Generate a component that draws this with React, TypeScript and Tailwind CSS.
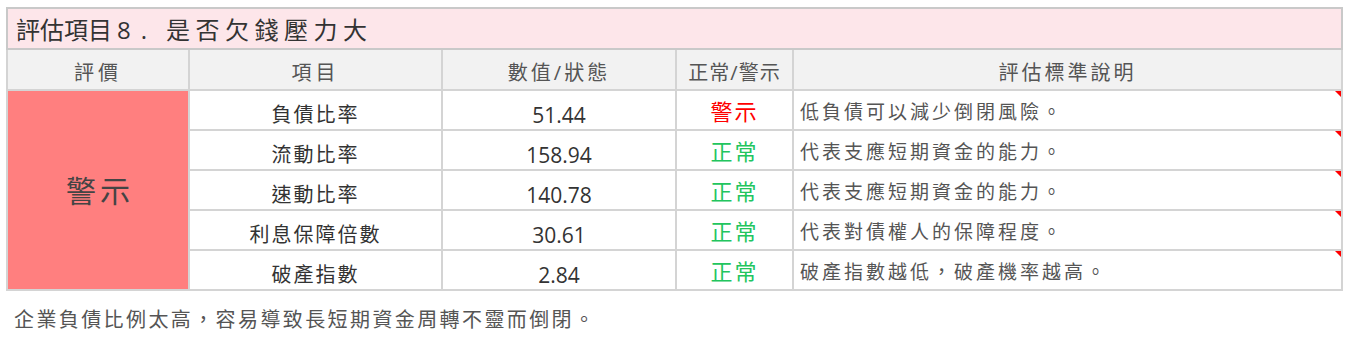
import React from "react";

const rows = [
  { item: "負債比率", value: "51.44", ok: false, desc: "低負債可以減少倒閉風險。" },
  { item: "流動比率", value: "158.94", ok: true, desc: "代表支應短期資金的能力。" },
  { item: "速動比率", value: "140.78", ok: true, desc: "代表支應短期資金的能力。" },
  { item: "利息保障倍數", value: "30.61", ok: true, desc: "代表對債權人的保障程度。" },
  { item: "破產指數", value: "2.84", ok: true, desc: "破產指數越低，破產機率越高。" },
];

const font = { fontFamily: '"Open Sans", "Noto Sans CJK TC", sans-serif' };

export default function App() {
  return (
    <div lang="zh-TW" className="w-[1348px] h-[339px] bg-white pt-[7px] pl-[6px]" style={font}>
      <table className="w-[1335px] border-collapse border-2 border-[#c9c9c9] table-fixed">
        <colgroup>
          <col className="w-[182px]" />
          <col className="w-[253px]" />
          <col className="w-[234px]" />
          <col className="w-[117px]" />
          <col className="w-[549px]" />
        </colgroup>
        <thead>
          <tr className="h-[41px] bg-[#fde6ea]">
            <th colSpan={5} className="border-2 border-[#c9c9c9] text-left pl-[8px] pt-[2px] text-[24px] leading-none font-normal text-[#333]">
              <span>評估項目</span>
              <span className="pl-[5px] tracking-[10px]">8.</span>
              <span className="pl-[9px] tracking-[5.5px]">是否欠錢壓力大</span>
            </th>
          </tr>
          <tr className="h-[41px] bg-[#f2f2f2] text-[20px] text-[#555]">
            <th className="border-2 border-[#d4d4d4] font-normal pt-[7px] tracking-[4px] leading-none">評價</th>
            <th className="border-2 border-[#d4d4d4] font-normal pt-[7px] tracking-[4px] leading-none">項目</th>
            <th className="border-2 border-[#d4d4d4] font-normal pt-[7px] tracking-[3px] leading-none">數值/狀態</th>
            <th className="border-2 border-[#d4d4d4] font-normal pt-[7px] tracking-[1px] leading-none">正常/警示</th>
            <th className="border-2 border-[#d4d4d4] font-normal pt-[7px] tracking-[3px] leading-none">評估標準說明</th>
          </tr>
        </thead>
        <tbody>
          {rows.map((r, i) => (
            <tr key={r.item} className="h-[40px] text-[#333]">
              {i === 0 && (
                <td rowSpan={5} className="border-2 border-[#d4d4d4] bg-[#ff7f7f] text-center text-[30px] text-[#444] tracking-[4px] pl-[4px]">
                  警示
                </td>
              )}
              <td className="border-2 border-[#d4d4d4] text-center pt-[10px] text-[20px] leading-none tracking-[2px]">{r.item}</td>
              <td className="border-2 border-[#d4d4d4] text-center pt-[10px] text-[21px] leading-none">{r.value}</td>
              <td className={`border-2 border-[#d4d4d4] text-center pt-[2px] text-[22px] leading-none tracking-[2px] ${r.ok ? "text-[#22c55e]" : "text-[#ff0000]"}`}>
                {r.ok ? "正常" : "警示"}
              </td>
              <td className="relative border-2 border-[#d4d4d4] pl-[6px] pt-[4px] text-[19px] leading-none text-[#555] tracking-[3px]">
                {r.desc}
                <span className="absolute right-0 top-0 w-0 h-0 border-l-[6px] border-l-transparent border-t-[6px] border-t-[#ff0000]" />
              </td>
            </tr>
          ))}
        </tbody>
      </table>
      <div className="mt-[19px] pl-[8px] text-[20px] leading-none text-[#555] tracking-[2.4px]">
        企業負債比例太高，容易導致長短期資金周轉不靈而倒閉。
      </div>
    </div>
  );
}
